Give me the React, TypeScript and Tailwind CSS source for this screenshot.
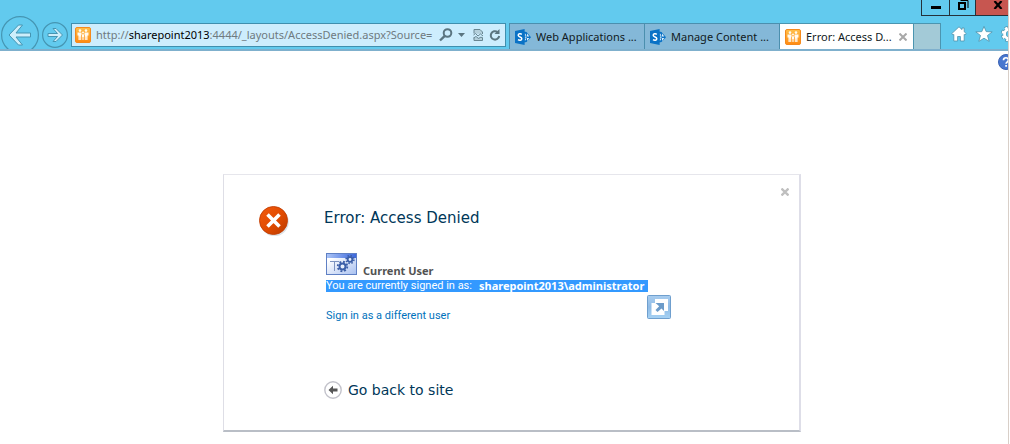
import React from "react";

const uiFont = "font-['Noto_Sans','Open_Sans',sans-serif]";
const headingFont = "font-['DejaVu_Sans',sans-serif]";
const bodyFont = "font-['Roboto','Noto_Sans',sans-serif]";
const strongFont = "font-['Noto_Sans',sans-serif]";

function PeopleIcon() {
  return (
    <svg className="h-4 w-4 shrink-0" viewBox="0 0 16 16" aria-hidden="true">
      <defs>
        <linearGradient id="people" x1="0" y1="0" x2="0" y2="1">
          <stop offset="0" stopColor="#ffc04a" />
          <stop offset="1" stopColor="#ff8a12" />
        </linearGradient>
      </defs>
      <rect x="0.5" y="0.5" width="15" height="15" rx="1.5" fill="url(#people)" stroke="#f58a1c" />
      <g fill="#fffaf0">
        <circle cx="5" cy="3.600" r="1.300" />
        <circle cx="11" cy="3.600" r="1.300" />
        <circle cx="8" cy="5.600" r="1" />
        <path d="M2.500 5.500h4v2.500H6.200V13H5.200V9.500h-.4V13H3.500V8.500h-1zM9.500 5.500h4v3h-1V13h-1.300V9.500h-.4V13H9.800V8h-.3z" />
        <path d="M7 7.200h2v2.800h-.4V13H7.400v-3H7z" />
      </g>
    </svg>
  );
}

function SharePointIcon() {
  return (
    <svg className="h-4 w-4 shrink-0" viewBox="0 0 16 16" aria-hidden="true">
      <path d="M9 2.500L11.500 3 16 8.200 11.500 13 9 13.500z" fill="#0a72c6" />
      <path d="M9.800 4v2.800h1.700zM9.800 9.500v2.800l1.700-2.800zM12 4.500l2.300 3.100H12zM12 8.900h2.300L12 12zM9.800 7.600h1.700v1.200H9.800z" fill="#e4f2fb" />
      <path d="M0 2l9.600-2v16L0 14z" fill="#0a72c6" />
      <path
        d="M6.800 5.300C5.600 4.500 3.200 4.600 3.200 6.300c0 2 3.600 1.500 3.600 3.400 0 1.800-2.400 1.900-3.800 1"
        fill="none"
        stroke="#fff"
        strokeWidth="1.500"
      />
    </svg>
  );
}

function Tab({ title, icon, active = false }: { title: string; icon: React.ReactNode; active?: boolean }) {
  return (
    <div
      role="tab"
      aria-selected={active}
      className={
        active
          ? "flex w-[134px] items-center border-t border-r border-[#4b95b0] bg-white pl-[5px] pr-1"
          : "flex w-[135px] items-center border-t border-r border-[#4b8fae] bg-[#84b8d8] pl-[5px] pr-1"
      }
    >
      {icon}
      <span className="ml-[5px] flex-1 whitespace-nowrap text-[11px] leading-4 text-[#111a22]">{title}</span>
      {active && (
        <button type="button" aria-label="Close tab" className="flex h-4 w-3 items-center justify-center">
          <svg className="h-2 w-2" viewBox="0 0 8 8">
            <path d="M0.500 0.500l7 7M7.500 0.500l-7 7" stroke="#a8a8a8" strokeWidth="2" />
          </svg>
        </button>
      )}
    </div>
  );
}

function WindowButtons() {
  return (
    <div className="flex h-4 justify-end">
      <button
        type="button"
        aria-label="Minimize"
        className="flex w-[28px] justify-center border-b border-l border-[#24313a] pt-1.5"
      >
        <span className="h-[3px] w-2.5 bg-black" />
      </button>
      <button
        type="button"
        aria-label="Restore"
        className="flex w-[26px] justify-center border-b border-l border-[#24313a]"
      >
        <svg className="h-3 w-3" viewBox="0 0 12 12">
          <path d="M3.500 0.500h7.500v7.500" fill="none" stroke="#000" strokeWidth="1" />
          <rect x="2" y="3" width="6" height="6" fill="none" stroke="#000" strokeWidth="2" />
        </svg>
      </button>
      <button
        type="button"
        aria-label="Close"
        className="flex w-[33px] justify-end border-b border-l border-[#24313a] bg-[#c75650] pr-[5px] pt-px"
      >
        <svg className="h-2 w-2.5" viewBox="0 0 10 8">
          <path d="M1.500 0l7 8M8.500 0l-7 8" stroke="#000" strokeWidth="2.200" />
        </svg>
      </button>
    </div>
  );
}

function AddressBar() {
  return (
    <div className="mt-[7px] ml-[3px] flex h-6 min-w-0 flex-1 items-center border border-[#3f8fae] bg-[#cdedfd] pl-[3px] pr-1">
      <PeopleIcon />
      <div className="ml-[5px] min-w-0 flex-1 overflow-hidden whitespace-nowrap text-[11px] leading-4 text-[#6f7a80]">
        http://<span className="text-black">sharepoint2013</span>:4444/_layouts/AccessDenied.aspx?Source=
      </div>
      <button type="button" aria-label="Search" className="ml-1">
        <svg className="h-3.5 w-3.5" viewBox="0 0 14 14" fill="none" stroke="#5b7580" strokeWidth="2">
          <circle cx="8.500" cy="5" r="3.800" />
          <path d="M5.800 7.800L1 12.500" strokeWidth="2.400" />
        </svg>
      </button>
      <button type="button" aria-label="Show address list" className="ml-[5px]">
        <svg className="h-1 w-[7px]" viewBox="0 0 7 4">
          <path d="M0 0h7L3.500 4z" fill="#5b7580" />
        </svg>
      </button>
      <button type="button" aria-label="Compatibility view" className="ml-2">
        <svg className="h-3 w-[11px]" viewBox="0 0 11 12" fill="none" stroke="#688692">
          <path d="M1 4.500V.5h6L9.500 3v2M1 8.500v3h8.500V8.500" fill="#b4d0dc" />
          <path d="M.5 6l2-1.500L5 7l2.500-2L10 7M.5 9L3 7.500 5.500 9.500 8 8l2 1.500" strokeWidth="1" />
        </svg>
      </button>
      <button type="button" aria-label="Refresh" className="ml-[5px]">
        <svg className="h-3 w-3" viewBox="0 0 12 12">
          <path d="M8.500 3A4.200 4.200 0 1 0 10.200 7" fill="none" stroke="#5b7580" strokeWidth="2" />
          <path d="M5.500 5h5V0z" fill="#5b7580" />
        </svg>
      </button>
    </div>
  );
}

function BrowserBar() {
  return (
    <header className={`border-b-2 border-[#7fb0cd] bg-[#62caee] ${uiFont}`}>
      <WindowButtons />
      <div className="flex h-[33px] items-stretch overflow-hidden">
        <button type="button" aria-label="Back" className="ml-px h-[38px] w-[38px] shrink-0">
          <svg className="h-[38px] w-[38px]" viewBox="0 0 38 38">
            <circle cx="19" cy="19" r="18.400" fill="none" stroke="#4595b2" strokeWidth="1.200" />
            <path
              d="M8 19l9.500-10h4L15 17h14.500v4H15l6.500 8h-4z"
              fill="#cdeefb"
              stroke="#4595b2"
              strokeWidth="1"
            />
          </svg>
        </button>
        <button type="button" aria-label="Forward" className="mt-1.5 ml-[3px] h-[26px] w-[26px] shrink-0">
          <svg className="h-[26px] w-[26px]" viewBox="0 0 26 26">
            <circle cx="13" cy="13" r="12.400" fill="none" stroke="#4595b2" strokeWidth="1.200" />
            <path
              d="M20.500 13l-6.500 6.500h-3L15.500 14.500H6v-3h9.500L11 6.500h3z"
              fill="#cdeefb"
              stroke="#4595b2"
              strokeWidth="1"
            />
          </svg>
        </button>
        <AddressBar />
        <div role="tablist" className="mt-[7px] ml-[3px] flex shrink-0 border-l border-[#4b8fae]">
          <Tab title="Web Applications ..." icon={<SharePointIcon />} />
          <Tab title="Manage Content ..." icon={<SharePointIcon />} />
          <Tab title="Error: Access D..." icon={<PeopleIcon />} active />
          <button
            type="button"
            aria-label="New tab"
            className="w-[27px] border-t border-r border-[#4b95b0] bg-[#a3cad7]"
          />
        </div>
        <div className="ml-2.5 flex w-[57px] shrink-0 gap-2 overflow-hidden pt-2.5">
          <button type="button" aria-label="Home" className="h-4 w-4 shrink-0">
            <svg className="h-4 w-4" viewBox="0 0 16 16">
              <path
                d="M8 .8L.8 7.600 2 9l.8-.6V15h3.800v-4.500h2.800V15h3.800V8.400L14 9l1.200-1.400-2-1.900V2h-2.200v1.600z"
                fill="#fff"
                stroke="#4c92ab"
                strokeWidth="0.800"
              />
            </svg>
          </button>
          <button type="button" aria-label="Favorites" className="h-4 w-[18px] shrink-0">
            <svg className="h-4 w-[18px]" viewBox="0 0 18 16">
              <path
                d="M9 .4l2.200 5.200 6 .3-4.700 3.600 1.700 5.900L9 12.200l-5.200 3.200 1.700-5.900L.8 5.900l6-.3z"
                fill="#fff"
                stroke="#4c92ab"
                strokeWidth="0.800"
              />
            </svg>
          </button>
          <button type="button" aria-label="Tools" className="h-4 w-4 shrink-0">
            <svg className="h-4 w-4" viewBox="0 0 16 16">
              <circle cx="8" cy="8" r="6.400" fill="none" stroke="#4c92ab" strokeWidth="3.400" strokeDasharray="3.200 1.827" />
              <circle cx="8" cy="8" r="4.500" fill="none" stroke="#4c92ab" strokeWidth="4" />
              <circle cx="8" cy="8" r="6.200" fill="none" stroke="#fff" strokeWidth="2.400" strokeDasharray="2.600 2.270" />
              <circle cx="8" cy="8" r="4.500" fill="none" stroke="#fff" strokeWidth="2.800" />
            </svg>
          </button>
        </div>
      </div>
    </header>
  );
}

function ErrorIcon() {
  return (
    <svg className="h-8 w-8 shrink-0" viewBox="0 0 32 32" aria-hidden="true">
      <defs>
        <linearGradient id="error" x1="0" y1="0" x2="1" y2="1">
          <stop offset="0" stopColor="#f35a0c" />
          <stop offset="0.550" stopColor="#e04a00" />
          <stop offset="1" stopColor="#b83a00" />
        </linearGradient>
      </defs>
      <circle cx="16.500" cy="16.800" r="14.300" fill="#dde3e8" />
      <circle cx="15.500" cy="15.500" r="14" fill="url(#error)" stroke="#c23f06" strokeWidth="0.900" />
      <path d="M9.500 9.500l12 12M21.500 9.500l-12 12" stroke="#fff" strokeWidth="3.600" />
    </svg>
  );
}

function UserIcon() {
  return (
    <svg className="h-[22px] w-[31px] shrink-0" viewBox="0 0 31 22" aria-hidden="true">
      <defs>
        <linearGradient id="bar" x1="0" x2="1">
          <stop offset="0" stopColor="#a9c3f6" />
          <stop offset="1" stopColor="#3c67dc" />
        </linearGradient>
        <linearGradient id="pane" x1="0" y1="0" x2="1" y2="1">
          <stop offset="0.200" stopColor="#fff" />
          <stop offset="1" stopColor="#a8c0f0" />
        </linearGradient>
      </defs>
      <rect x="0.500" y="0.500" width="30" height="21" fill="url(#pane)" stroke="#5f80c4" />
      <rect x="1" y="1" width="29" height="4" fill="url(#bar)" />
      <path d="M4 8.500h9M8.500 8.500V18" stroke="#7d93c0" fill="none" />
      <g fill="none" stroke="#3c5fa8">
        <circle cx="16.500" cy="13.500" r="3" fill="#e6eefc" strokeWidth="2" />
        <circle cx="16.500" cy="13.500" r="4.800" strokeWidth="1.800" strokeDasharray="1.900 1.870" />
        <circle cx="24" cy="6.500" r="2.300" fill="#e6eefc" strokeWidth="1.800" />
        <circle cx="24" cy="6.500" r="3.900" strokeWidth="1.600" strokeDasharray="1.500 1.563" />
      </g>
    </svg>
  );
}

function AcceleratorButton() {
  return (
    <button type="button" aria-label="Accelerators" className="absolute top-[120px] left-[423px] h-6 w-6">
      <svg className="h-6 w-6" viewBox="0 0 24 24">
        <defs>
          <linearGradient id="accel" x1="0" y1="0" x2="0" y2="1">
            <stop offset="0" stopColor="#a9cdef" />
            <stop offset="0.500" stopColor="#8fbbe6" />
            <stop offset="1" stopColor="#a6d2f4" />
          </linearGradient>
        </defs>
        <rect x="0.500" y="0.500" width="23" height="23" rx="1" fill="url(#accel)" stroke="#6f9fce" />
        <path d="M8 4h13v12h-3.500v4H4.500V8H8z" fill="#fff" />
        <path d="M8.500 8h8.500v8l-2.500-2.500-4 3.500-2-2 3.700-3.700z" fill="#6c9bc9" />
      </svg>
    </button>
  );
}

function AccessDeniedPanel() {
  return (
    <section
      className={`relative mx-auto w-full max-w-[578px] border-t border-r-2 border-b-2 border-l border-t-[#e6e6ec] border-r-[#dedee8] border-b-[#b9bec6] border-l-[#dedee6] pt-[30px] pr-4 pb-[30px] pl-[34px] ${bodyFont}`}
    >
      <button type="button" aria-label="Close" className="absolute top-[13px] right-2.5 h-2 w-2">
        <svg className="h-2 w-2" viewBox="0 0 8 8">
          <path d="M0.500 0.500l7 7M7.500 0.500l-7 7" stroke="#bfbfbf" strokeWidth="2.300" />
        </svg>
      </button>
      <div className="flex items-start gap-[34px]">
        <ErrorIcon />
        <div className="min-w-0 flex-1">
          <h1 className={`pt-[3px] text-[15px] leading-5 text-[#003759] ${headingFont}`}>Error: Access Denied</h1>
          <div className="mt-[25px] pl-0.5 text-[11px] leading-3">
            <div className="flex items-end gap-1.5">
              <UserIcon />
              <h2 className={`translate-y-0.5 font-bold text-[#525252] ${strongFont}`}>Current User</h2>
            </div>
            <p className="mt-[5px] flex w-fit items-center gap-[7px] bg-[#3399ff] pr-1 whitespace-nowrap text-white">
              <span>You are currently signed in as:</span>
              <strong className={strongFont}>sharepoint2013\administrator</strong>
            </p>
            <a href="#signin" className="mt-[18px] block w-fit text-[#0072bc]">
              Sign in as a different user
            </a>
          </div>
          <a
            href="#site"
            className={`mt-[58px] flex w-fit items-center gap-1.5 text-[14px] leading-5 text-[#003759] ${headingFont}`}
          >
            <svg className="h-[18px] w-[18px]" viewBox="0 0 18 18" aria-hidden="true">
              <circle cx="9" cy="9" r="8.200" fill="#fff" stroke="#c3c3cb" strokeWidth="1.400" />
              <path d="M4.500 9L9 4.800v2.700h4.500v3H9v2.700z" fill="#555" />
            </svg>
            Go back to site
          </a>
        </div>
      </div>
      <AcceleratorButton />
    </section>
  );
}

export default function App() {
  return (
    <div className="min-h-screen bg-white pr-px">
      <div className="min-h-screen border-r border-[#d8cfc8]">
        <BrowserBar />
        <div className="flex justify-end overflow-hidden pt-[3px]">
          <button type="button" aria-label="Help" className="-mr-1.5 h-4 w-4">
            <svg className="h-4 w-4" viewBox="0 0 16 16">
              <circle cx="8" cy="8" r="7.500" fill="#4877cf" stroke="#3a62b4" />
              <path
                d="M5.500 6.200C5.500 3 10.500 3 10.500 6c0 1.800-2.400 1.900-2.400 3.800M8.100 11v1.800"
                fill="none"
                stroke="#fff"
                strokeWidth="1.700"
              />
            </svg>
          </button>
        </div>
        <main className="pt-[104px] pl-4">
          <AccessDeniedPanel />
        </main>
      </div>
    </div>
  );
}
